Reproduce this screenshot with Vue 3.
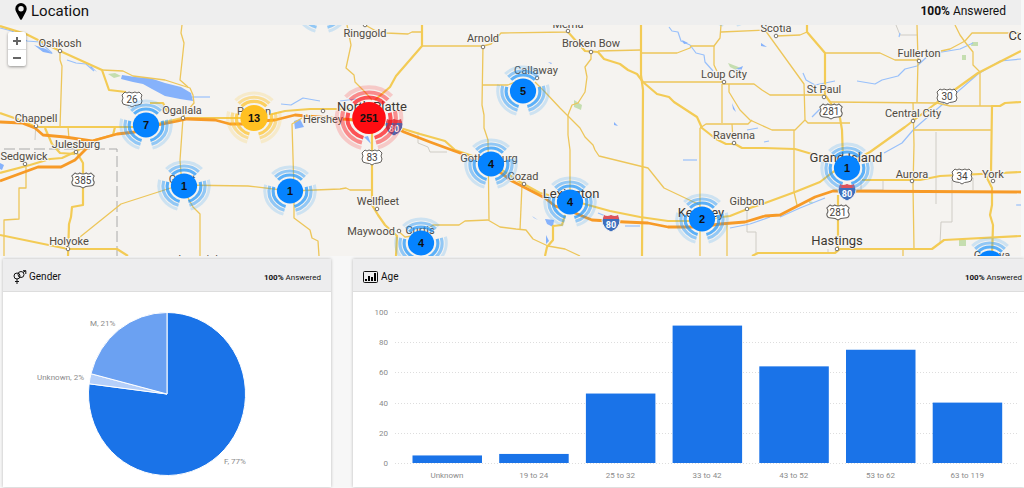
<script setup>
const highways = [
  '0,26 26,34 60,51 102,70 109,90 126,92',
  '150,103 163,103 168,113',
  '0,113 20,120 36,127 120,127 145,127 182,118 225,118 256,118 285,111 310,109 350,109',
  '0,173 30,165 50,159 62,158 75,152 95,140 113,135 115,127',
  '45,128 52,144 60,153 75,154',
  '77,153 83,163 83,205 72,207 71,217 69,224 68,256',
  '0,235 68,249 117,249 128,256',
  '422,25 422,46 396,76 390,87 375,100',
  '372,120 372,205 378,215 385,225 397,236 396,256',
  '397,127 420,134 445,141 455,150 490,162 520,182 540,193 570,200 610,211 640,217 668,221 690,221 730,216 750,208 765,203 795,192 820,182 833,172 870,152 905,127 935,104 978,73 1021,51',
  '641,25 641,75 643,90 642,256',
  '568,32 585,51 598,52 604,59 620,64 628,70 637,74 643,82 657,94 669,97 674,102 697,117 702,128 716,139 726,144 735,144 742,148 764,148 795,149 812,154',
  '565,215 562,225 553,226 553,240 547,247 545,256',
  '807,25 807,32 825,53 825,95 830,102 840,118 842,130 843,160',
  '838,195 838,250 835,253',
  '1021,102 1005,103 1000,106 992,106 991,172 987,178 992,188 992,205 990,215 993,225 992,256',
  '752,256 758,253 835,253 840,249 932,249 944,240 1021,236',
  '862,180 920,180 940,176 1021,172',
]
const roads = [
  '102,70 123,71 133,76 165,80 190,88 193,95 194,103 188,110 182,118',
  '60,51 60,60 62,66 60,127',
  '182,25 181,33 184,43 180,80 188,87',
  '68,127 69,139',
  '26,165 26,188 19,188 19,219 4,220 4,256',
  '80,237 121,204 180,185 248,186 290,191 340,189 346,188 350,190 372,190',
  '183,118 180,160 182,187 193,207 200,214 200,256',
  '347,25 351,45 346,68 354,75 355,82 365,92 372,100',
  '365,25 376,31 386,33 408,34 412,32 422,32',
  '422,46 483,46 491,44 501,33 568,32 567,25',
  '483,46 482,105 484,115 484,128 488,140 489,220',
  '482,85 508,85 520,80',
  '302,118 292,124 294,190 294,218 310,230 312,238 318,241 319,256',
  '397,230 405,237 420,235 433,225 459,225 465,221 488,220 500,227 516,229 526,230 533,239 548,246 565,249 580,256',
  '598,51 641,50',
  '591,52 591,59 585,67 587,77 585,92 578,103 572,105 568,115 568,135 570,150 570,200',
  '535,82 545,92 560,108 580,128 585,137 593,145 595,150 599,156 648,168 664,188 700,205',
  '641,53 677,53 690,48 691,46 714,46 720,38 721,25',
  '721,32 765,30 804,84 805,120 808,123 850,123',
  '714,46 714,65 722,82',
  '643,82 722,82',
  '722,84 754,84 762,90 770,95 825,95',
  '722,84 722,123',
  '729,84 729,92 740,110 750,120 772,130 795,130 805,120',
  '700,128 706,124 748,124 752,120',
  '700,128 700,256',
  '732,124 733,140',
  '522,185 520,230',
  '727,225 727,256',
  '776,36 800,35 807,32',
  '825,53 880,53 895,60 919,60',
  '917,25 918,60 917,102',
  '830,102 937,103 950,106 992,106',
  '913,102 914,145 913,186 914,249',
  '955,25 960,35 965,42 973,52 973,65 980,72 980,106',
  '1021,33 972,33 965,41 950,49 941,51',
  '913,130 992,130',
  '794,130 794,192 797,205',
  '903,249 903,256',
]
const interstates = [
  '0,122 22,123 35,128 43,135 65,137 92,141 117,134 135,132 158,125 178,121 187,119 215,120 230,124 254,124 262,121 275,120 295,115 330,118 355,120 390,125 404,132 430,142 460,153 490,165 512,181 545,198 555,206 575,213 592,220 625,222 648,223 668,227 700,227 720,224 745,222 765,216 780,215 815,197 833,191 1021,192',
  '0,181 38,167 61,167 75,160 92,143',
]
const greyRoads = [
  '418,132 418,143 428,147 430,152 447,152',
  '747,212 747,232 756,232 756,253',
  '896,25 900,35 917,35',
  '36,120 35,140',
  '936,132 936,204',
  '952,180 952,222 941,222 940,244',
  '861,180 861,190 883,190 883,181',
  '828,249 828,254',
  '973,178 973,190',
]
const streams = [
  '0,28 12,31 27,41 40,42 52,53',
  '67,60 76,63 86,64 94,71',
  '192,97 210,97',
  '281,104 291,105 303,98 320,101',
  '340,101 356,99',
  '669,27 672,31 678,32 681,41 690,45 696,53 704,55 705,62 713,71',
  '803,73 806,80 815,85 835,81',
  '857,81 875,84 882,80 898,76 905,69 917,66 930,54 960,49 973,43',
  '812,117 820,109',
  '914,129 930,115 962,88 978,74 1000,61 1021,59',
  '884,153 902,143 914,129',
  '899,37 900,33',
  '780,217 800,208 825,198',
  '625,226 640,226',
  '730,228 750,224 770,217',
  '683,160 697,160',
  '1016,205 1021,205',
  '747,130 758,128',
  '764,142 769,141',
  '598,213 608,217',
]
const lakes = [
  '122,75 135,77 150,78 165,83 181,87 191,93 193,101 180,99 165,96 152,89 143,84 133,82 121,79',
  '294,121 300,119 304,127 295,129',
  '364,137 368,136 371,144',
  '34,45 46,49 53,54 43,52',
  '91,66 97,72 90,67',
  '682,40 688,43 684,44',
  '761,43 767,47 761,46',
  '736,69 743,66 741,71 735,74',
  '545,219 554,220 553,227 547,224',
  '532,216 538,220 534,218',
  '546,235 549,241 546,244',
  '614,122 618,126 614,125',
  '732,103 736,112 733,109',
  '0,163 4,165 2,170 0,169',
  '548,62 552,63 551,64',
]
const parks = [
  '108,74 115,73 121,76 114,78',
  '574,100 582,105 581,110 574,107',
  '728,63 741,68 740,72 730,67',
  '972,42 978,42 978,46 971,46',
  '962,55 966,55 966,60 962,60',
  '959,240 966,240 966,246 959,246',
  '809,201 813,202 812,204 809,203',
]
const towns = [
  [60, 47, 'Oshkosh'], [36, 122, 'Chappell'], [182, 114, 'Ogallala'], [254, 115, 'Paxton'],
  [323, 123, 'Hershey'], [365, 37, 'Ringgold'], [483, 42, 'Arnold'], [568, 28, 'Merna'],
  [591, 47, 'Broken Bow'], [536, 74, 'Callaway'], [724, 78, 'Loup City'], [776, 32, 'Scotia'],
  [919, 57, 'Fullerton'], [824, 93, 'St Paul'], [913, 117, 'Central City'], [734, 139, 'Ravenna'],
  [76, 148, 'Julesburg'], [24, 160, 'Sedgwick'], [69, 245, 'Holyoke'], [182, 183, 'Grant'],
  [378, 205, 'Wellfleet'], [371, 235, 'Maywood'], [420, 234, 'Curtis'], [489, 162, 'Gothenburg'],
  [523, 180, 'Cozad'], [747, 205, 'Gibbon'], [912, 178, 'Aurora'], [993, 178, 'York'],
  [198, 263, 'Imperial'], [992, 259, 'Geneva'],
]
const cities = [
  [372, 111, 'North Platte'], [571, 198, 'Lexington'], [701, 217, 'Kearney'],
  [846, 162, 'Grand Island'], [837, 245, 'Hastings'], [1038, 40, 'Columbus'],
]
const dots = [
  [60, 51], [36, 126], [183, 118], [323, 111], [365, 25], [483, 47], [568, 31], [591, 52],
  [537, 78], [724, 82], [776, 36], [919, 61], [824, 97], [913, 121], [734, 143], [76, 152],
  [25, 164], [68, 249], [377, 209], [399, 231], [524, 184], [747, 209], [912, 181], [993, 181], [837, 249],
]
const routes = [[132, 99, '26'], [83, 180, '385'], [372, 157, '83'], [831, 111, '281'], [838, 212, '281'], [947, 96, '30'], [962, 176, '34']]
const freeways = [[394, 127], [611, 223], [847, 192]]
const clusters = [
  { x: 322, y: 8, n: '' }, { x: 730, y: 2, n: '' },
  { x: 146, y: 125, n: '7' }, { x: 184, y: 186, n: '1' }, { x: 290, y: 191, n: '1' },
  { x: 523, y: 91, n: '5' }, { x: 421, y: 243, n: '4' }, { x: 491, y: 164, n: '4' },
  { x: 570, y: 202, n: '4' }, { x: 702, y: 219, n: '2' }, { x: 847, y: 168, n: '1' },
  { x: 990, y: 263, n: '' },
  { x: 254, y: 118, n: '13', color: '#ffc021', size: 1.04 },
  { x: 369, y: 118, n: '251', color: '#ff0d12', size: 1.28 },
]
const rings = [[16, 0.7], [20, 0.45], [24, 0.18]]

const ages = [
  ['Unknown', 5], ['19 to 24', 6], ['25 to 32', 46], ['33 to 42', 91],
  ['43 to 52', 64], ['53 to 62', 75], ['63 to 119', 40],
]
const ticks = [100, 80, 60, 40, 20, 0]
const yOf = (v) => 171 - v * 1.51

const pie = [
  ['#1a73e8', 0, 77], ['#b4cffa', 77, 79], ['#6ba1f2', 79, 100],
]
function slice([, from, to]) {
  const pt = (p) => {
    const a = (p / 50) * Math.PI
    return `${164 + 78.5 * Math.sin(a)} ${102 - 81.5 * Math.cos(a)}`
  }
  return `M164 102L${pt(from)}A78.5 81.5 0 ${to - from > 50 ? 1 : 0} 1 ${pt(to)}Z`
}
</script>

<template>
  <main class="dashboard">
    <section class="location">
      <header class="location-head">
        <svg class="pin" viewBox="0 0 12 17" aria-hidden="true">
          <path fill-rule="evenodd" d="M6 0a5.7 5.7 0 0 0-5.7 5.7c0 1.2.3 2 .8 3L5.1 16.3q.9 1.1 1.8 0L10.9 8.7c.5-1 .8-1.800.8-3A5.7 5.7 0 0 0 6 0zM6 3a2.7 2.7 0 1 1 0 5.4A2.7 2.7 0 0 1 6 3z" />
        </svg>
        <h1>Location</h1>
        <p class="answered"><b>100%</b> Answered</p>
      </header>
      <div class="map">
        <svg class="map-canvas" viewBox="0 25 1021 231" role="img" aria-label="Respondent locations">
          <rect y="25" width="1021" height="231" fill="#f5f3f0" />
          <polygon v-for="p in parks" :key="p" :points="p" fill="#c5deb0" />
          <polyline v-for="p in greyRoads" :key="p" :points="p" class="grey" />
          <path d="M4 149H117V256" class="border" />
          <polyline v-for="p in streams" :key="p" :points="p" class="stream" />
          <polygon v-for="p in lakes" :key="p" :points="p" fill="#86b2fb" />
          <polyline v-for="p in roads" :key="p" :points="p" class="road" />
          <polyline v-for="p in highways" :key="p" :points="p" class="highway" />
          <polyline v-for="p in interstates" :key="p" :points="p" class="interstate" />
          <circle v-for="([x, y], i) in dots" :key="i" :cx="x" :cy="y" r="1.8" class="dot" />
          <g v-for="([x, y, n], i) in routes" :key="'r' + i" :transform="`translate(${x} ${y})`">
            <path class="shield" :transform="n.length > 2 ? 'scale(1.12 1)' : ''" d="M-7-7Q-5-5-3-7Q0-5 3-7Q5-5 7-7L10-4Q8-1 10 2Q10 6 6 6Q2 6 0 8Q-2 6-6 6Q-10 6-10 2Q-8-1-10-4Z" />
            <text y="4" class="route">{{ n }}</text>
          </g>
          <g v-for="([x, y], i) in freeways" :key="'f' + i" :transform="`translate(${x} ${y})`">
            <path d="M-7-8Q-4-6 0-8Q4-6 7-8L9-3Q9 5 0 9Q-9 5-9-3Z" fill="#3e6fbd" stroke="#f5f3f0" />
            <path d="M-7-8Q-4-6 0-8Q4-6 7-8L8-4H-8Z" fill="#df525b" />
            <text y="5" class="freeway">80</text>
          </g>
          <text v-for="[x, y, t] in towns" :key="t" :x="x" :y="y" class="town">{{ t }}</text>
          <text v-for="[x, y, t] in cities" :key="t" :x="x" :y="y" class="city">{{ t }}</text>
          <g v-for="(c, i) in clusters" :key="'c' + i" :transform="`translate(${c.x} ${c.y})`">
            <g :transform="`scale(${(c.size || 1) * 1.05} ${c.size || 1})`" :fill="c.color || '#0583ff'" :stroke="c.color || '#1993fb'">
              <circle v-for="[r, o] in rings" :key="r" :r="r" fill="none" stroke-width="3" :stroke-opacity="o" pathLength="360" stroke-dasharray="90 30" transform="rotate(-135)" />
              <circle r="12.5" stroke="none" />
            </g>
            <text y="4" class="count">{{ c.n }}</text>
          </g>
        </svg>
        <div class="zoom">
          <button type="button" aria-label="Zoom in"><svg viewBox="0 0 10 10"><path d="M1 5H9M5 1V9" /></svg></button>
          <button type="button" aria-label="Zoom out"><svg viewBox="0 0 10 10"><path d="M1 5H9" /></svg></button>
        </div>
      </div>
    </section>

    <div class="cards">
      <section class="card">
        <header>
          <svg class="icon gender-icon" viewBox="0 0 14 14" aria-hidden="true">
            <g fill="none" stroke="#111">
              <circle cx="4" cy="6" r="3" /><circle cx="8" cy="4.5" r="3" />
              <path d="M4 9V14M2 11.500H6M10 2.500L12.500.8M10 .7H12.800V4" />
            </g>
          </svg>
          <h2>Gender</h2>
          <p class="answered"><b>100%</b> Answered</p>
        </header>
        <svg class="chart" viewBox="0 0 328 195" role="img" aria-label="Gender breakdown">
          <path v-for="s in pie" :key="s[0]" :d="slice(s)" :fill="s[0]" stroke="#fff" stroke-width="1" />
          <text x="87" y="34">M, 21%</text>
          <text x="34" y="88">Unknown, 2%</text>
          <text x="221" y="172">F, 77%</text>
        </svg>
      </section>

      <section class="card age">
        <header>
          <svg class="icon age-icon" viewBox="0 0 15 12" aria-hidden="true">
            <rect x=".5" y=".5" width="14" height="11" rx="1" fill="none" stroke="#111" />
            <path d="M2 8h2v2H2zM5 5h2v5H5zM8 6h2v4H8zM11 2h2v8h-2z" />
          </svg>
          <h2>Age</h2>
          <p class="answered"><b>100%</b> Answered</p>
        </header>
        <svg class="chart" viewBox="0 0 671 195" role="img" aria-label="Age breakdown">
          <g v-for="t in ticks" :key="t">
            <path :d="`M42 ${Math.round(yOf(t))}.5H665`" class="gridline" />
            <text x="35" :y="yOf(t) + 3" text-anchor="end">{{ t }}</text>
          </g>
          <g v-for="([label, v], i) in ages" :key="label">
            <rect :x="59.5 + i * 86.7" :y="yOf(v)" width="69.5" :height="v * 1.51" fill="#1a73e8" />
            <text :x="94 + i * 86.7" y="186" text-anchor="middle">{{ label }}</text>
          </g>
        </svg>
      </section>
    </div>
  </main>
</template>

<style>
body {
  background: #f7f7f7;
}
</style>

<style scoped>
.dashboard {
  font-family: Roboto, "Liberation Sans", sans-serif;
  color: #111;
  overflow: hidden;
}
h1, h2, p {
  margin: 0;
  font-weight: 400;
}
.answered {
  margin-left: auto;
}
.location {
  margin-right: 3px;
}
.location-head {
  display: flex;
  align-items: center;
  height: 25px;
  padding: 0 15px 3px;
  box-sizing: border-box;
  background: #eee;
  font-size: 12px;
}
.pin {
  width: 12px;
  height: 17px;
  margin-right: 4px;
}
h1 {
  font-size: 15px;
  line-height: 22px;
}
.map {
  position: relative;
}
.map-canvas, .chart {
  display: block;
  width: 100%;
  height: auto;
}
polyline, .border {
  fill: none;
  stroke-linejoin: round;
}
.road { stroke: #edc65a; stroke-width: 1.3; }
.highway { stroke: #f3cb55; stroke-width: 2.2; }
.interstate { stroke: #f79a27; stroke-width: 2.8; }
.grey { stroke: #cfccc5; stroke-width: 1; }
.border { stroke: #aaa; stroke-width: 1; stroke-dasharray: 11 4; }
.stream { stroke: #98c0fb; stroke-width: 1.2; }
.dot { fill: #fff; stroke: #77736c; stroke-width: 1; }
.shield { fill: #fff; stroke: #66635f; stroke-width: 1; }
.map-canvas text {
  text-anchor: middle;
}
.town, .city {
  fill: #504b43;
  stroke: #f7f5f2;
  stroke-width: 2;
  paint-order: stroke;
  font-size: 11px;
}
.city {
  fill: #3d3933;
  font-size: 13px;
}
.route {
  font-size: 10px;
  fill: #44413d;
}
.freeway {
  font-size: 9px;
  font-weight: 700;
  fill: #fff;
}
.count {
  font: 700 11px "Liberation Sans", sans-serif;
  fill: #111;
}
.zoom {
  position: absolute;
  top: 7px;
  left: 8px;
  border-radius: 2px;
  background: #fff;
  box-shadow: 0 1px 3px rgba(0, 0, 0, 0.4);
}
.zoom button {
  display: flex;
  align-items: center;
  justify-content: center;
  width: 18px;
  height: 17px;
  padding: 0;
  border: 0;
  background: none;
}
.zoom button + button {
  border-top: 1px solid #ddd;
}
.zoom svg {
  width: 10px;
  height: 10px;
  stroke: #666;
  stroke-width: 2;
}
.cards {
  display: grid;
  grid-template-columns: 328fr 671fr;
  gap: 22px;
  padding: 3px 0 1px 3px;
}
.card {
  background: #fff;
  box-shadow: 0 0 3px rgba(0, 0, 0, 0.25);
}
.card header {
  display: flex;
  align-items: center;
  height: 33px;
  padding: 4px 10px 0;
  box-sizing: border-box;
  background: #ededee;
  border-bottom: 1px solid #ddd;
  font-size: 8px;
}
.card.age header {
  padding-right: 2px;
}
h2 {
  font-size: 10px;
  line-height: 14px;
}
.gender-icon {
  width: 14px;
  height: 14px;
  margin-right: 2px;
}
.age-icon {
  width: 15px;
  height: 12px;
  margin-right: 3px;
}
.chart text {
  font-size: 8px;
  fill: #8b8b8b;
}
.gridline {
  stroke: #ddd;
  stroke-dasharray: 1 2;
}
</style>
